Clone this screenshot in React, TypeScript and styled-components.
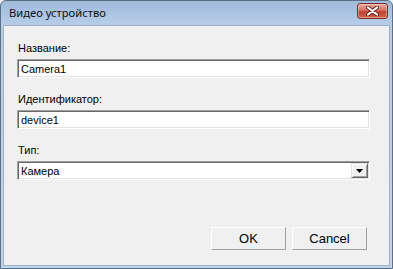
import { FC } from "react";
import styled, { createGlobalStyle } from "styled-components";

const GlobalStyle = createGlobalStyle`
    html, body {
        margin: 0;
        padding: 0;
        background: #f0f0f0;
    }
    * {
        box-sizing: border-box;
    }
`;

const Window = styled.div`
    width: 393px;
    height: 269px;
    display: flex;
    flex-direction: column;
    border: 1px solid #5d6f84;
    border-radius: 6px 6px 0 0;
    background: linear-gradient(#9fbbdb 0px, #b6cde8 24px, #bfd5ec 100%);
    padding: 0 2px 2px 2px;
    overflow: hidden;
`;

const TitleBar = styled.div`
    height: 24px;
    display: flex;
    align-items: center;
    justify-content: space-between;
    padding: 0 2px 0 6px;
`;

const Title = styled.span`
    font-family: "Noto Sans", "Open Sans", sans-serif;
    font-size: 11.2px;
    color: #111;
    margin-top: -1px;
`;

const CloseButton = styled.div`
    width: 31px;
    height: 16px;
    margin-top: -4px;
    display: flex;
    align-items: center;
    justify-content: center;
    border: 1px solid #7b2e29;
    border-radius: 3px;
    background: linear-gradient(#e9a99d 0%, #d7725f 45%, #c2402c 55%, #d2624e 100%);
    box-shadow: inset 0 0 0 1px rgba(255, 220, 210, 0.45);
`;

const Client = styled.div`
    flex: 1;
    display: flex;
    flex-direction: column;
    background: #f0f0f0;
    border: 1px solid #9fb1c6;
    padding: 16px 19px 15px 13px;
`;

const Field = styled.div`
    display: flex;
    flex-direction: column;
    gap: 4px;
    margin-bottom: 15px;
`;

const Label = styled.label`
    font-family: "Liberation Sans", Arial, sans-serif;
    font-size: 11px;
    line-height: 13px;
    color: #000;
    padding-left: 1px;
`;

const Sunken = styled.div`
    height: 19px;
    display: flex;
    align-items: center;
    background: #fff;
    border-top: 1px solid #a0a0a0;
    border-left: 1px solid #a0a0a0;
    border-right: 1px solid #fff;
    border-bottom: 1px solid #fff;
    box-shadow: inset 1px 1px 0 #696969, inset -1px -1px 0 #e3e3e3;
    padding: 0 2px 0 3px;
    font-family: "Liberation Sans", Arial, sans-serif;
    font-size: 11px;
    color: #000;
`;

const Value = styled.span`
    flex: 1;
    white-space: nowrap;
`;

const DropButton = styled.div`
    width: 17px;
    height: 15px;
    margin-right: -1px;
    display: flex;
    align-items: center;
    justify-content: center;
    background: #f0f0f0;
    border-top: 1px solid #e3e3e3;
    border-left: 1px solid #e3e3e3;
    border-right: 1px solid #696969;
    border-bottom: 1px solid #696969;
    box-shadow: inset 1px 1px 0 #fff, inset -1px -1px 0 #a0a0a0;
`;

const ButtonRow = styled.div`
    margin-top: auto;
    display: flex;
    justify-content: flex-end;
    gap: 6px;
    padding-right: 3px;
`;

const Button = styled.button`
    width: 75px;
    height: 23px;
    padding: 0;
    background: #f0f0f0;
    border-top: 1px solid #fff;
    border-left: 1px solid #fff;
    border-right: 1px solid #a0a0a0;
    border-bottom: 1px solid #a0a0a0;
    font-family: "Liberation Sans", Arial, sans-serif;
    font-size: 13px;
    color: #000;
`;

const App: FC = () => {
    return (
        <>
            <GlobalStyle />
            <Window>
                <TitleBar>
                    <Title>Видео устройство</Title>
                    <CloseButton>
                        <svg width="13" height="10" viewBox="0 0 13 10">
                            <path
                                d="M2 1.5 L11 8.5 M11 1.5 L2 8.5"
                                stroke="#5a2620"
                                strokeWidth="4"
                                strokeLinecap="round"
                            />
                            <path
                                d="M2 1.5 L11 8.5 M11 1.5 L2 8.5"
                                stroke="#fff"
                                strokeWidth="2.2"
                                strokeLinecap="round"
                            />
                        </svg>
                    </CloseButton>
                </TitleBar>
                <Client>
                    <Field>
                        <Label>Название:</Label>
                        <Sunken>
                            <Value>Camera1</Value>
                        </Sunken>
                    </Field>
                    <Field>
                        <Label>Идентификатор:</Label>
                        <Sunken>
                            <Value>device1</Value>
                        </Sunken>
                    </Field>
                    <Field>
                        <Label>Тип:</Label>
                        <Sunken>
                            <Value>Камера</Value>
                            <DropButton>
                                <svg width="7" height="4" viewBox="0 0 7 4">
                                    <path d="M0 0 H7 L3.5 4 Z" fill="#000" />
                                </svg>
                            </DropButton>
                        </Sunken>
                    </Field>
                    <ButtonRow>
                        <Button>OK</Button>
                        <Button>Cancel</Button>
                    </ButtonRow>
                </Client>
            </Window>
        </>
    );
};

export default App;
